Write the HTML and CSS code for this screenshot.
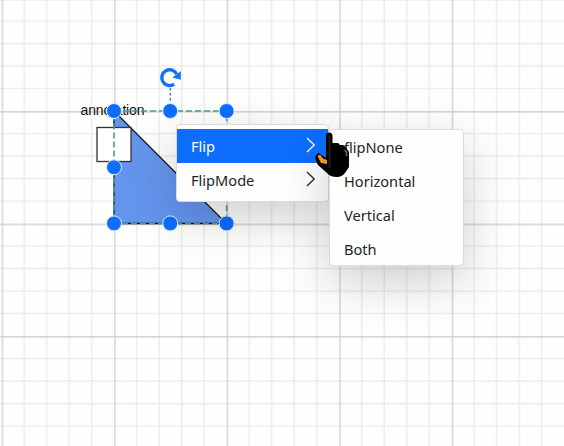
FILE: index.html
```html
<!DOCTYPE html>
<html lang="en">
<head>
<meta charset="utf-8">
<title>Diagram</title>
<link rel="stylesheet" href="styles.css">
</head>
<body>
<main class="diagram">
  <svg class="canvas" width="564" height="446" viewBox="0 0 564 446">
    <defs>
      <pattern id="grid" x="1.7" y="-1.4" width="112.5" height="112.5" patternUnits="userSpaceOnUse">
        <path class="minor" d="M22.5 0V112.5M45 0V112.5M67.5 0V112.5M90 0V112.5M0 22.5H112.5M0 45H112.5M0 67.5H112.5M0 90H112.5"/>
        <path class="major" d="M.7 0V112.5M0 .7H112.5"/>
      </pattern>
    </defs>
    <rect width="564" height="446" fill="url(#grid)"/>
    <path class="shape" d="M114 111V223.5H226.5Z"/>
    <rect class="port" x="97" y="127.5" width="34" height="34"/>
    <text class="annotation" x="80.5" y="115" textLength="64">annotation</text>
    <rect class="selection" x="114" y="111" width="112.7" height="112.5"/>
    <path class="rotate-line" d="M170.3 88V103"/>
    <path class="rotate-arc" d="M174.2 84.2A7.9 7.9 0 1 1 176.8 74.3"/>
    <path class="rotate-head" d="M180.8 71.2V79.8L172.4 77.4Z"/>
    <g class="handles">
      <circle cx="114" cy="111" r="7.5"/><circle cx="170.2" cy="111" r="7.5"/><circle cx="226.6" cy="111" r="7.5"/>
      <circle cx="114" cy="167.3" r="7.5"/>
      <circle cx="114" cy="223.4" r="7.5"/><circle cx="170.2" cy="223.4" r="7.5"/><circle cx="226.6" cy="223.4" r="7.5"/>
    </g>
  </svg>
  <ul class="menu menu-main">
    <li class="item active"><span>Flip</span><svg class="chevron" width="10" height="16" viewBox="0 0 10 16"><path d="M1 1L8.2 8L1 15"/></svg></li>
    <li class="item"><span>FlipMode</span><svg class="chevron" width="10" height="16" viewBox="0 0 10 16"><path d="M1 1L8.2 8L1 15"/></svg></li>
  </ul>
  <ul class="menu menu-sub">
    <li class="item">flipNone</li>
    <li class="item">Horizontal</li>
    <li class="item">Vertical</li>
    <li class="item">Both</li>
  </ul>
  <svg class="pointer" width="36" height="48" viewBox="0 0 36 48">
    <path class="hand" d="M11 4Q11 1.500 14 1.500Q17.500 1.500 17.500 5V12H23L25 14H28Q31 15 31.500 18Q34 19 34 22V36L30 42Q27 46 22 46Q15 46 12 42L3 34Q0 29 .5 25L3.500 22L11 27Z"/>
    <path class="thumb" d="M2.500 25L5 23.500L8 27.500L12 29V33L6 32Z"/>
    <path class="knuckle" d="M29.500 19Q32 20 31.500 25"/>
    <path class="finger" d="M14.500 5V37"/>
  </svg>
</main>
</body>
</html>
```
FILE: styles.css
```css
body {
  margin: 0;
  background: #fefefc;
  font-family: "Noto Sans", "Open Sans", sans-serif;
}
.diagram {
  position: relative;
  width: 564px;
  height: 446px;
  overflow: hidden;
}
.canvas { display: block; }
.minor { stroke: #ebebeb; stroke-width: 1.4; }
.major { stroke: #d1d1cf; stroke-width: 1.4; }
.shape { fill: #6495ed; stroke: #111; stroke-width: 1.3; }
.port { fill: #fff; stroke: #333; stroke-width: 1.3; }
.annotation {
  font: 14px "Liberation Sans", Arial, sans-serif;
  fill: #111;
}
.selection {
  fill: none;
  stroke: #4a9c9e;
  stroke-width: 1.6;
  stroke-dasharray: 6 3;
}
.rotate-line { stroke: #1677f5; stroke-width: 1.3; stroke-dasharray: 2.5 2.5; }
.rotate-arc { fill: none; stroke: #1273f2; stroke-width: 3.4; }
.rotate-head { fill: #1273f2; }
.handles { fill: #0d6efd; stroke: #e3f1ff; stroke-width: 1; }
.menu {
  position: absolute;
  box-sizing: border-box;
  margin: 0;
  list-style: none;
  background: #fefefc;
  border: 1px solid #d8dcdf;
  border-radius: 4px;
  box-shadow: 0 16px 48px rgba(0, 0, 0, .19);
}
.menu-main {
  left: 176px;
  top: 124px;
  width: 153px;
  height: 78px;
  padding: 4px 0;
}
.menu-sub {
  left: 329px;
  top: 129px;
  width: 135px;
  height: 137px;
  padding-left: 0;
}
.item {
  display: flex;
  align-items: center;
  justify-content: space-between;
  box-sizing: border-box;
  height: 34px;
  padding: 0 12px 0 14px;
  color: #212529;
  font-size: 14.6px;
  line-height: 20px;
}
.active { background: #0d6efd; color: #fff; }
.chevron {
  margin-top: -2px;
  fill: none;
  stroke: currentColor;
  stroke-width: 1.3;
}
.pointer { position: absolute; left: 315px; top: 131px; }
.hand { fill: #000; }
.thumb { fill: #ef941f; }
.finger { stroke: #211b1a; stroke-width: 2; }
.knuckle { fill: none; stroke: #a85c3d; stroke-width: 1.5; }
```
